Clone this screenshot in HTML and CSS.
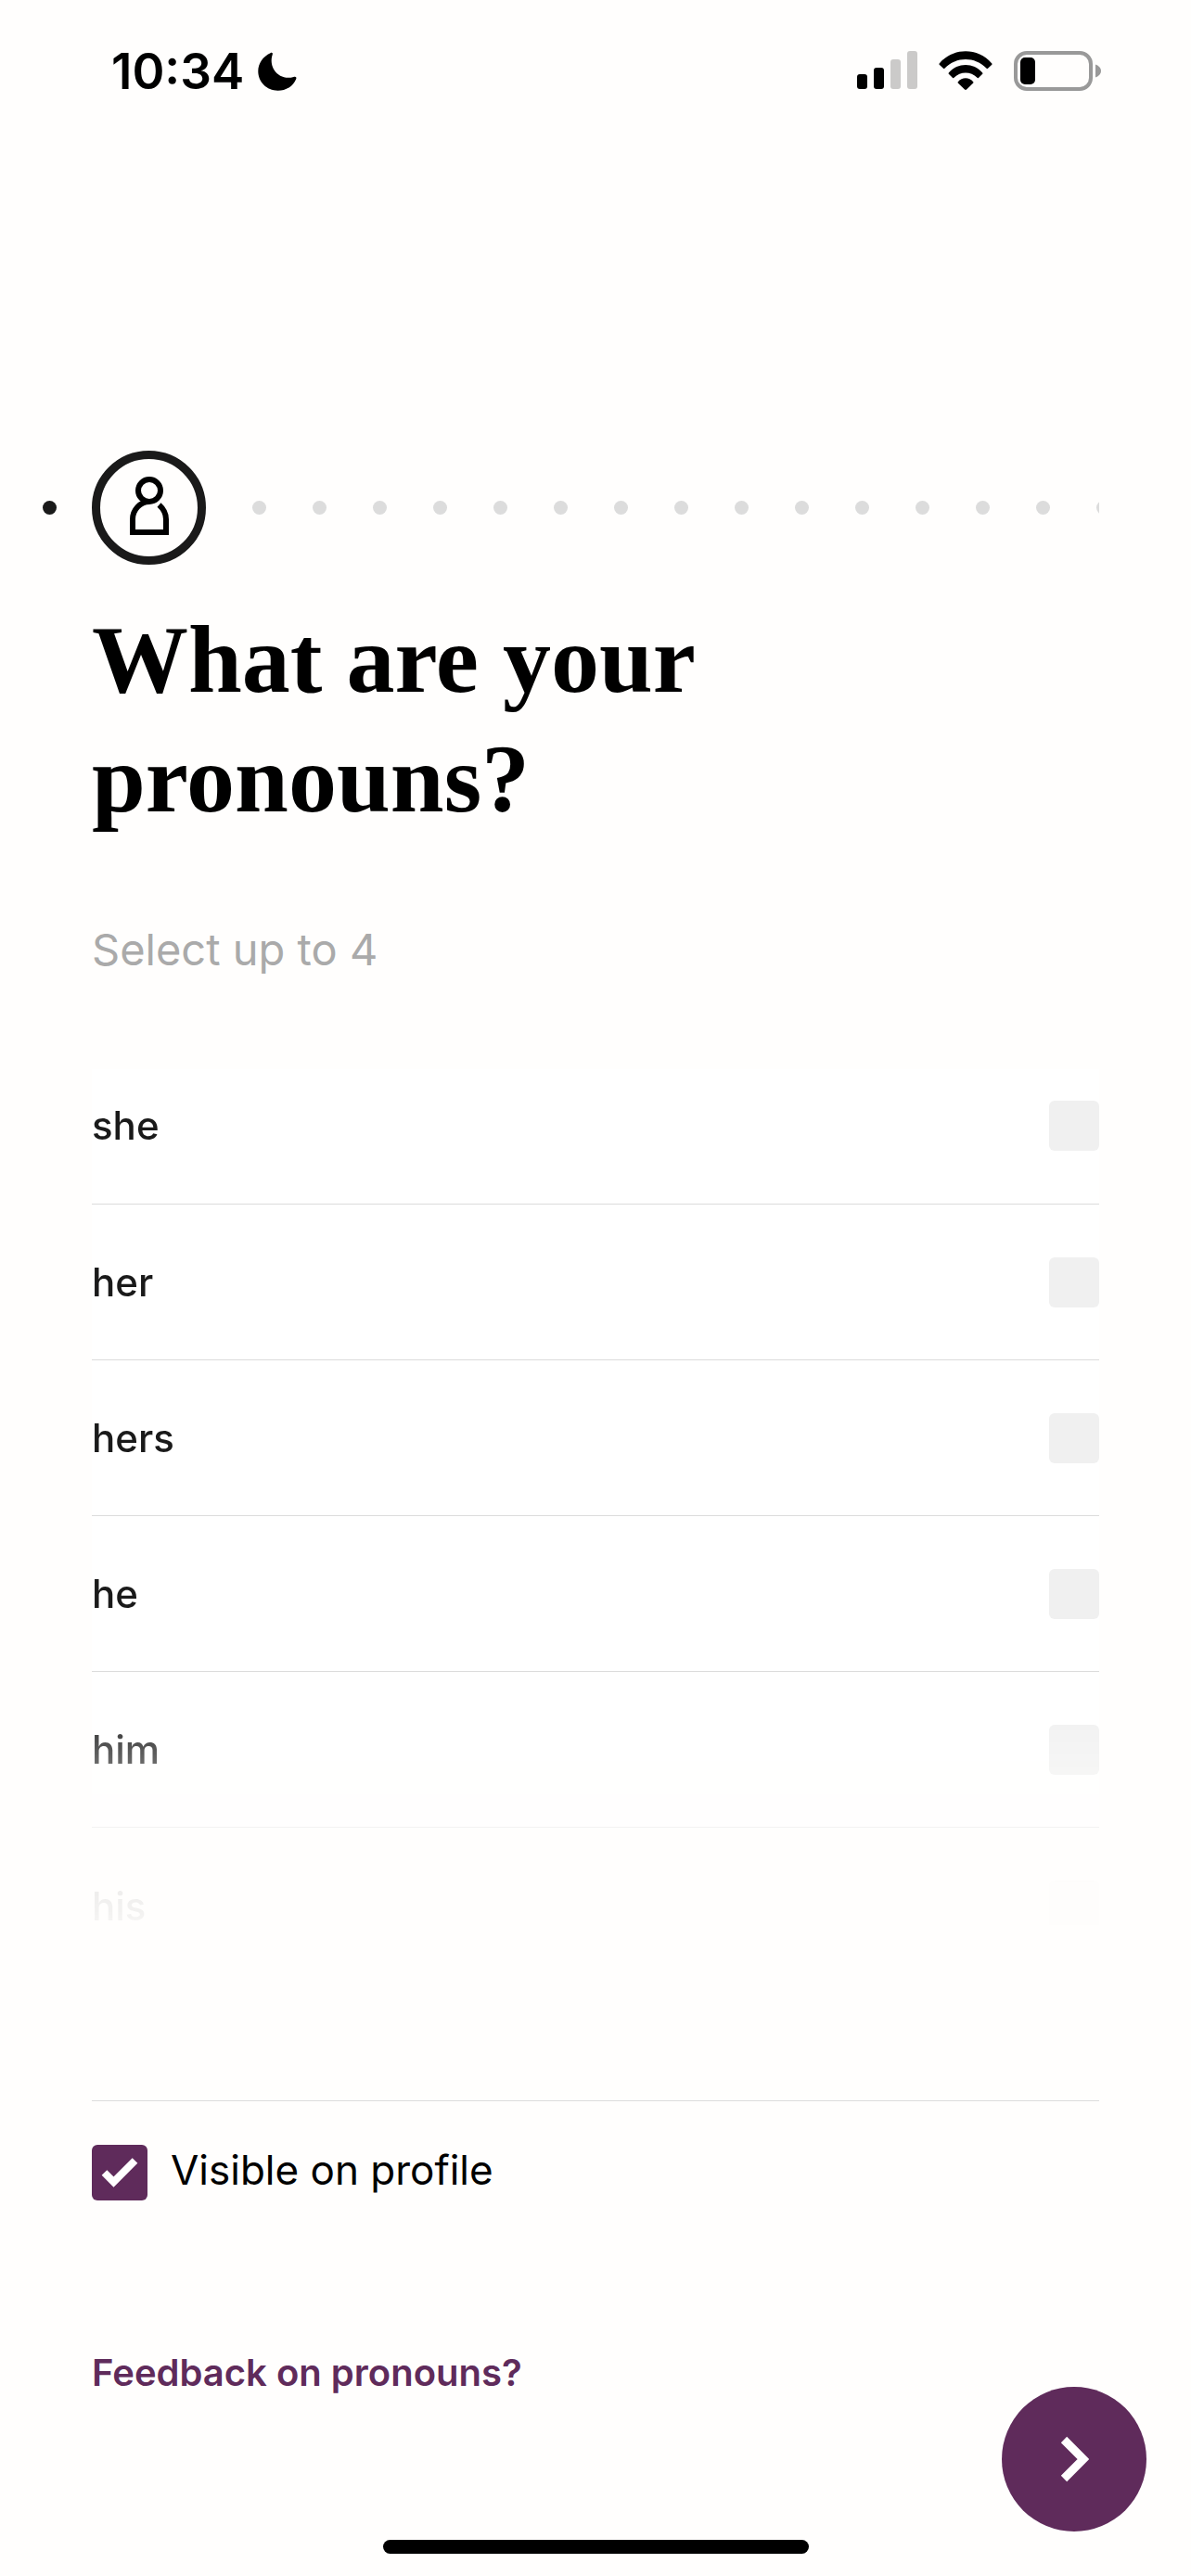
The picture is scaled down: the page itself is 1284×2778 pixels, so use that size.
FILE: index.html
```html
<!DOCTYPE html>
<html lang="en">
<head>
<meta charset="utf-8">
<meta name="viewport" content="width=device-width, initial-scale=1">
<title>What are your pronouns?</title>
<link rel="stylesheet" href="styles.css">
</head>
<body>
<div class="screen">
  <header class="status">
    <div class="status-left">
      <span class="clock">10:34</span>
      <svg class="moon" viewBox="0 0 42 42" aria-hidden="true"><path d="M13.5 1.2C15 .4 16.500 .9 15.700 3C11 17 23 31.500 38.500 27C41 26.300 42 27.300 41.200 29.200C38 37 30.500 41.700 21.500 41.700C9.500 41.700 .3 32.500 .3 20.800C.3 12.500 5.500 4.800 13.500 1.200Z"/></svg>
    </div>
    <div class="status-right">
      <svg class="signal" viewBox="0 0 65 42" aria-hidden="true">
        <rect x="0" y="25" width="11" height="16" rx="3"/>
        <rect x="18" y="18" width="11" height="23" rx="3"/>
        <rect class="dim" x="36" y="9" width="11" height="32" rx="3"/>
        <rect class="dim" x="54" y="0" width="11" height="41" rx="3"/>
      </svg>
      <svg class="wifi" viewBox="0 0 58 42" aria-hidden="true">
        <path d="M.7 13.400C16 -4 42 -4 57.300 13.400Q57.900 14.100 57.300 14.700L53 18.800Q52.300 19.400 51.600 18.700C39 5.700 19 5.700 6.400 18.700Q5.700 19.400 5 18.800L.7 14.700Q.1 14.100.7 13.400Z"/>
        <path d="M10.800 23.500C20.500 12.200 37.500 12.200 47.200 23.500Q47.800 24.200 47.200 24.800L42.900 28.900Q42.200 29.500 41.500 28.800C34.500 21.800 23.500 21.800 16.500 28.800Q15.800 29.500 15.100 28.900L10.800 24.800Q10.200 24.200 10.800 23.500Z"/>
        <path d="M20.800 33.300C25 28 33 28 37.200 33.300Q37.700 34 37.200 34.500L30 41.500Q29 42.300 28 41.500L20.800 34.500Q20.300 34 20.800 33.300Z"/>
      </svg>
      <svg class="battery" viewBox="0 0 95 43" aria-hidden="true">
        <rect class="shell" x="2" y="2" width="81" height="39" rx="12"/>
        <rect x="7" y="7" width="16" height="29" rx="5"/>
        <path class="nub" d="M88 14.500C92 16 94 18.500 94 21.500C94 24.500 92 27 88 28.500Z"/>
      </svg>
    </div>
  </header>

  <main class="content">
    <div class="progress">
      <i class="dot done"></i>
      <span class="step">
        <svg viewBox="0 0 42 63" aria-hidden="true"><circle cx="21" cy="15" r="12"/><path d="M31.500 30.500C36 34.500 39 40 39 46V60H3V46C3 36 11 27 21 27"/></svg>
      </span>
      <span class="dots"><i class="dot"></i><i class="dot"></i><i class="dot"></i><i class="dot"></i><i class="dot"></i><i class="dot"></i><i class="dot"></i><i class="dot"></i><i class="dot"></i><i class="dot"></i><i class="dot"></i><i class="dot"></i><i class="dot"></i><i class="dot"></i><i class="dot"></i></span>
    </div>

    <h1 class="title">What are your pronouns?</h1>
    <p class="hint">Select up to 4</p>

    <ul class="options">
      <li><label class="option">she<input type="checkbox" name="pronoun" value="she"></label></li>
      <li><label class="option">her<input type="checkbox" name="pronoun" value="her"></label></li>
      <li><label class="option">hers<input type="checkbox" name="pronoun" value="hers"></label></li>
      <li><label class="option">he<input type="checkbox" name="pronoun" value="he"></label></li>
      <li><label class="option">him<input type="checkbox" name="pronoun" value="him"></label></li>
      <li><label class="option">his<input type="checkbox" name="pronoun" value="his"></label></li>
    </ul>

    <div class="visibility">
      <label class="visible">
        <span class="tick">
          <input type="checkbox" name="visible" checked>
          <svg viewBox="0 0 60 60" aria-hidden="true"><path d="M13.500 30L23.500 40L46.500 17"/></svg>
        </span>
        <span class="visible-text">Visible on profile</span>
      </label>
    </div>

    <a class="feedback" href="#feedback">Feedback on pronouns?</a>
  </main>

  <button class="next" type="button" aria-label="Next">
    <svg viewBox="0 0 32 50" aria-hidden="true"><path d="M5 4L26 25L5 46"/></svg>
  </button>
  <div class="home-bar"></div>
</div>
</body>
</html>
```

FILE: styles.css
```css
* {
  box-sizing: border-box;
}

body {
  margin: 0;
  background: #fffefd;
  color: #000;
  font-family: Inter, "Liberation Sans", sans-serif;
}

.screen {
  position: relative;
  display: flex;
  flex-direction: column;
  min-height: 100vh;
}

/* Status bar */
.status {
  display: flex;
  justify-content: space-between;
  align-items: center;
  height: 152px;
  padding: 0 96px 0 120px;
}

.status-left,
.status-right {
  display: flex;
  align-items: center;
}

.status-left {
  gap: 15px;
  padding-top: 2px;
}

.status-right {
  gap: 23px;
}

.clock {
  font-size: 53px;
  font-weight: 600;
  line-height: 64px;
}

.moon {
  width: 42px;
  height: 42px;
}

.signal {
  width: 65px;
  height: 42px;
}

.wifi {
  width: 58px;
  height: 42px;
}

.battery {
  width: 95px;
  height: 43px;
}

.dim {
  fill: #cbcac9;
}

.shell {
  fill: none;
  stroke: #999;
  stroke-width: 4;
}

.nub {
  fill: #999;
}

/* Main column */
.content {
  display: flex;
  flex-direction: column;
  padding: 334px 99px 0;
}

.progress {
  display: flex;
  align-items: center;
  margin-left: -53px;
}

.dot {
  flex: none;
  width: 15px;
  height: 15px;
  border-radius: 50%;
  background: #dcdcdc;
}

.done {
  background: #1a1a1a;
}

.step {
  flex: none;
  display: grid;
  place-items: center;
  width: 123px;
  height: 123px;
  margin: 0 50px 0 38px;
  border: 9px solid #1a1a1a;
  border-radius: 50%;
}

.step svg {
  width: 42px;
  height: 63px;
  margin-bottom: 4px;
  fill: none;
  stroke: #000;
  stroke-width: 6;
}

.dots {
  flex: 1;
  min-width: 0;
  display: flex;
  gap: 50px;
  overflow: hidden;
}

.title {
  max-width: 800px;
  margin: 37px 0 0;
  font-family: "Liberation Serif", serif;
  font-size: 104px;
  font-weight: 700;
  line-height: 129px;
}

.hint {
  margin: 88px 0 0;
  color: #aaa;
  font-size: 47px;
  line-height: 64px;
}

/* Pronoun list, fading out towards its end */
.options {
  margin: 97px 0 0;
  padding: 0;
  list-style: none;
  background: #fff;
  mask-image: linear-gradient(to top, transparent 40px, rgba(0, 0, 0, 0.05) 75px, rgba(0, 0, 0, 0.08) 105px, rgba(0, 0, 0, 0.34) 169px, rgba(0, 0, 0, 0.65) 237px, #000 305px);
}

.option {
  display: flex;
  justify-content: space-between;
  align-items: center;
  height: 168px;
  border-bottom: 1px solid #dcdcdc;
  color: #1a1a1a;
  font-size: 42px;
  font-weight: 500;
}

.options li:first-child .option {
  height: 146px;
  padding-bottom: 24px;
}

.options li:last-child .option {
  border-bottom: 0;
}

.option input {
  appearance: none;
  width: 54px;
  height: 54px;
  margin: 0;
  border-radius: 6px;
  background: #f0f0f0;
}

.visibility {
  margin-top: 126px;
  padding-top: 47px;
  border-top: 1px solid #dcdcdc;
}

.visible {
  display: flex;
  align-items: flex-start;
  gap: 25px;
  font-size: 44px;
  line-height: 54px;
}

.tick {
  display: grid;
  width: 60px;
  height: 60px;
}

.tick input,
.tick svg {
  grid-area: 1 / 1;
  width: 60px;
  height: 60px;
}

.tick input {
  appearance: none;
  margin: 0;
  border-radius: 6px;
  background: #5f2b5b;
}

.tick svg {
  fill: none;
  stroke: #fff;
  stroke-width: 8;
  pointer-events: none;
}

.feedback {
  align-self: flex-start;
  margin-top: 156px;
  color: #5f2b5b;
  font-size: 40px;
  font-weight: 600;
  line-height: 60px;
  text-decoration: none;
}

/* Floating action */
.next {
  position: absolute;
  right: 48px;
  bottom: 48px;
  display: grid;
  place-items: center;
  width: 156px;
  height: 156px;
  padding: 0;
  border: 0;
  border-radius: 50%;
  background: #5f2b5b;
}

.next svg {
  width: 32px;
  height: 50px;
  fill: none;
  stroke: #fff;
  stroke-width: 9;
}

.home-bar {
  align-self: center;
  width: 459px;
  height: 15px;
  margin: auto 0 24px;
  border-radius: 8px;
  background: #000;
}
```
